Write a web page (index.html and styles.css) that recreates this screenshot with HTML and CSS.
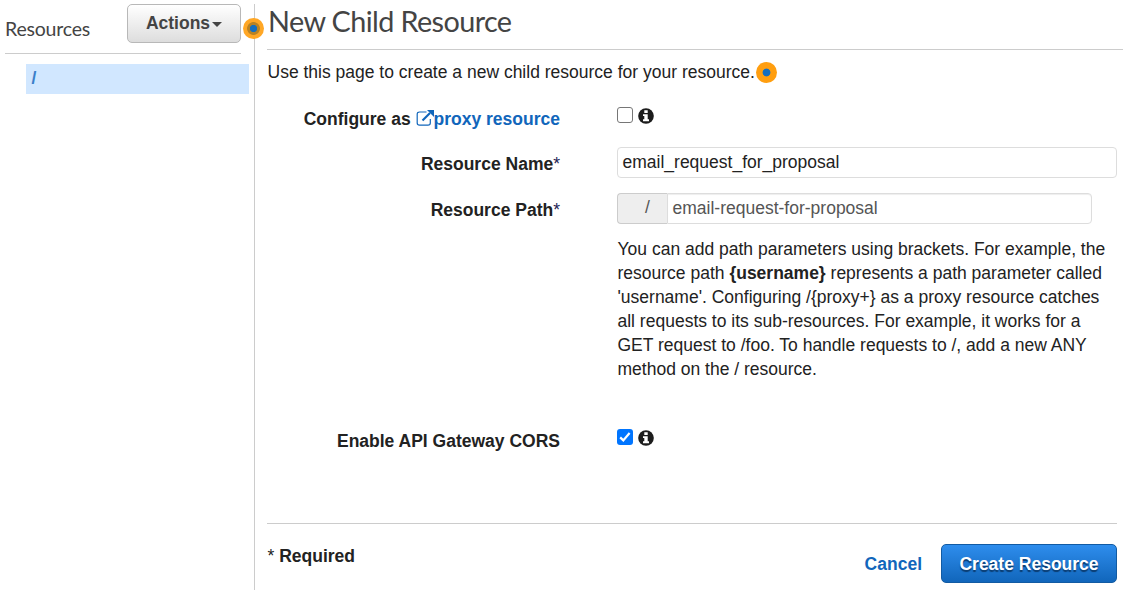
FILE: index.html
```
<!DOCTYPE html>
<html lang="en">
<head>
<meta charset="utf-8">
<title>New Child Resource</title>
<link rel="stylesheet" href="styles.css">
</head>
<body>
<div class="app">
  <aside class="sidebar">
    <header class="sidebar-head">
      <h2 class="sidebar-title">Resources</h2>
      <button class="btn actions" type="button">Actions<span class="caret"></span></button>
    </header>
    <div class="tree-item">/</div>
    <span class="hotspot hotspot-sidebar"></span>
  </aside>
  <main class="main">
    <h1 class="title">New Child Resource</h1>
    <p class="intro"><span>Use this page to create a new child resource for your resource.</span><span class="hotspot"></span></p>
    <form class="form">
      <div class="row row-proxy">
        <div class="label">Configure as <a class="link"><svg class="ext" viewBox="0 0 18 18"><path d="M10.5 3H3.6Q1.2 3 1.2 5.2V14Q1.2 16.2 3.6 16.2H12Q14.3 16.2 14.3 14V10" fill="none" stroke="currentColor" stroke-width="1.2"/><path d="M6.5 11.5L14 4" stroke="currentColor" stroke-width="2.2"/><path d="M11 1H18V8Z" fill="currentColor"/></svg>proxy resource</a></div>
        <div class="checks"><span class="box"></span><svg class="info" viewBox="0 0 16 16"><circle cx="8" cy="8" r="7.8" fill="#1c1c1c"/><path d="M6.3 2.3H9.7V5H6.3ZM5 6.2H9.7V11.3H11V13.2H5V11.3H6.3V8H5Z" fill="#fff"/></svg></div>
      </div>
      <div class="row row-name">
        <div class="label">Resource Name<span class="req">*</span></div>
        <div class="input">email_request_for_proposal</div>
      </div>
      <div class="row row-path">
        <div class="label">Resource Path<span class="req">*</span></div>
        <div class="group"><span class="addon">/</span><div class="input input-path">email-request-for-proposal</div></div>
      </div>
      <p class="help">You can add path parameters using brackets. For example, the<br>resource path <b>{username}</b> represents a path parameter called<br>'username'. Configuring /{proxy+} as a proxy resource catches<br>all requests to its sub-resources. For example, it works for a<br>GET request to /foo. To handle requests to /, add a new ANY<br>method on the / resource.</p>
      <div class="row row-cors">
        <div class="label">Enable API Gateway CORS</div>
        <div class="checks"><span class="box box-on"><svg viewBox="0 0 16 16"><path d="M3.2 8.4L6.3 11.4L12.6 4" fill="none" stroke="#fff" stroke-width="2.2"/></svg></span><svg class="info" viewBox="0 0 16 16"><circle cx="8" cy="8" r="7.8" fill="#1c1c1c"/><path d="M6.3 2.3H9.7V5H6.3ZM5 6.2H9.7V11.3H11V13.2H5V11.3H6.3V8H5Z" fill="#fff"/></svg></div>
      </div>
    </form>
    <footer class="footer">
      <div class="required"><span class="req-note">*</span> Required</div>
      <div class="footer-actions"><a class="link">Cancel</a><button class="btn primary" type="button">Create Resource</button></div>
    </footer>
  </main>
</div>
</body>
</html>
```
FILE: styles.css
```
* { box-sizing: border-box; }
body {
  margin: 0;
  background: #fff;
  color: #222;
  font: 17.5px/24px "Liberation Sans", Arial, sans-serif;
  white-space: nowrap;
}
h1, h2, p { margin: 0; font-weight: 400; }
.app { display: flex; width: 1123px; height: 590px; overflow: hidden; }
.sidebar { position: relative; width: 255px; margin-top: 4px; padding-left: 5px; border-right: 1px solid #ccc; }
.sidebar-head { display: flex; justify-content: space-between; width: 236px; height: 50px; border-bottom: 1px solid #ccc; }
.sidebar-title { margin-top: 13px; color: #444; font: 19.5px/24px Lato, sans-serif; letter-spacing: -0.2px; }
.btn { display: flex; align-items: center; justify-content: center; height: 39px; padding: 0; border-radius: 5px; font: bold 17.5px/24px "Liberation Sans", Arial, sans-serif; }
.actions { width: 114px; padding-bottom: 2px; border: 1px solid #b8b8b8; background: linear-gradient(#fff, #ddd); color: #444; }
.caret { margin: 4px 0 0 2px; border: 5px solid transparent; border-top-color: #444; border-bottom: 0; }
.tree-item { width: 223px; height: 30px; margin: 10px 0 0 21px; padding: 2px 0 0 5.5px; background: #d1e7ff; color: #3b7fc9; font-weight: 700; }
.hotspot { width: 21px; height: 21px; border-radius: 50%; background: radial-gradient(circle, #146ebf 0 3.5px, #ff9e0f 4.3px); }
.hotspot-sidebar { position: absolute; left: 243px; top: 14px; background: radial-gradient(circle, #146ebf 0 3.3px, #b98224 4px 6px, #ffa726 6.8px); }
.main { width: 856px; margin-left: 12px; }
.title { height: 50px; padding: 3px 0 0 1px; border-bottom: 1px solid #ccc; color: #444; font: 28.8px/36px Lato, sans-serif; letter-spacing: -0.6px; }
.intro { display: flex; align-items: center; gap: 1.5px; height: 24px; margin-top: 10px; padding-left: 0.5px; }
.form { height: 439px; }
.row { display: flex; }
.label { width: 293px; margin-right: 57px; text-align: right; font-weight: 700; }
.link { color: #1166bb; font-weight: 700; }
.ext { width: 18px; height: 18px; vertical-align: -2px; }
.req { color: #225; font-weight: 400; }
.checks { display: flex; gap: 5px; }
.box { width: 16px; height: 16px; border: 1px solid #767676; border-radius: 3px; }
.box-on { border: 0; background: #0075ff; }
.box-on svg { display: block; }
.info { width: 16px; height: 16px; margin-top: 1px; }
.row-proxy { height: 63px; padding-top: 23px; }
.input { width: 500px; height: 31px; padding: 2px 4.5px; border: 1px solid #ddd; border-radius: 4px; }
.row-name { height: 46px; }
.row-name .label, .row-path .label { padding-top: 5px; }
.row-path { height: 44px; }
.group { display: flex; }
.addon { width: 50px; height: 31px; padding: 1px 0 0 10px; border: 1px solid #ccc; border-right: 0; border-radius: 4px 0 0 4px; background: #eee; color: #555; text-align: center; }
.input-path { width: 425px; border-radius: 0 4px 4px 0; color: #555; box-shadow: inset 0 1px 1px #eee; }
.help { height: 192px; margin-left: 350.5px; }
.footer { display: flex; justify-content: space-between; width: 850px; height: 67px; border-top: 1px solid #ccc; }
.required { margin-top: 20px; padding-left: 0.5px; font-weight: 700; }
.req-note { font-weight: 400; }
.footer-actions { display: flex; align-items: center; gap: 19px; height: 39px; margin-top: 20px; }
.primary { width: 176px; border: 1px solid #125ba3; background: linear-gradient(#2e8ded, #1166bb); color: #fff; text-shadow: 0 2px 1px #0b3c70; }
```
